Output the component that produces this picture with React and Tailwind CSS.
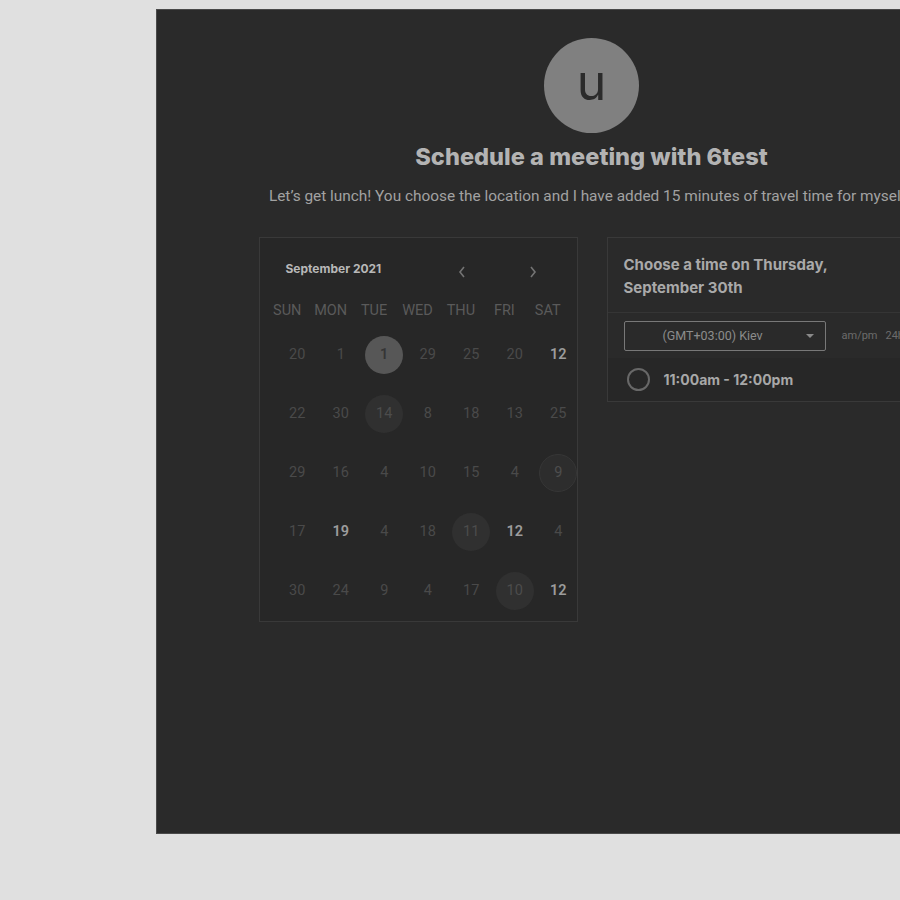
import React from "react";

const rows = [
  [["20"], ["1"], ["1", "sel"], ["29"], ["25"], ["20"], ["12", "b"]],
  [["22"], ["30"], ["14", "c"], ["8"], ["18"], ["13"], ["25"]],
  [["29"], ["16"], ["4"], ["10"], ["15"], ["4"], ["9", "ring"]],
  [["17"], ["19", "b"], ["4"], ["18"], ["11", "c"], ["12", "b"], ["4"]],
  [["30"], ["24"], ["9"], ["4"], ["17"], ["10", "c"], ["12", "b"]],
];

function Day({ v, k }) {
  if (k === "sel")
    return (
      <div className="w-[38px] h-[38px] rounded-full bg-[#575757] flex items-center justify-center text-[#353535] font-semibold">
        {v}
      </div>
    );
  if (k === "c")
    return (
      <div className="w-[38px] h-[38px] rounded-full bg-[#303030] flex items-center justify-center text-[#4c4c4c]">
        {v}
      </div>
    );
  if (k === "ring")
    return (
      <div className="w-[38px] h-[38px] rounded-full bg-[#2d2d2d] border border-[#363636] flex items-center justify-center text-[#4e4e4e]">
        {v}
      </div>
    );
  if (k === "b") return <span className="text-[#9c9c9c] font-semibold">{v}</span>;
  return <span className="text-[#4a4a4a]">{v}</span>;
}

export default function App() {
  return (
    <div className="w-[900px] h-[900px] overflow-hidden bg-[#e0e0e0] relative" style={{ fontFamily: "Roboto, 'Liberation Sans', sans-serif" }}>
      <div className="ml-[156px] mt-[9px] w-[870px] h-[825px] bg-[#2a2a2a] border-l border-b border-t border-[#4a4a4a] flex flex-col items-center pt-[28px]">
        <div className="w-[95px] h-[95px] rounded-full bg-[#808080] flex items-center justify-center">
          <span className="text-[50px] leading-none text-[#2b2b2b] -mt-[8px]" style={{ fontFamily: "Inter, sans-serif" }}>u</span>
        </div>
        <h1 className="mt-[9px] text-[23.6px] font-extrabold text-[#b3b3b3] leading-[30px]" style={{ fontFamily: "Inter, sans-serif" }}>
          Schedule a meeting with 6test
        </h1>
        <p className="mt-[14px] text-[15.4px] text-[#a2a2a2] whitespace-nowrap leading-[20px] -translate-x-[2px]">
          Let’s get lunch! You choose the location and I have added 15 minutes of travel time for myself.
        </p>
        <div className="mt-[31px] w-[666px] flex gap-[29px] items-start">
          <div className="w-[319px] h-[385px] bg-[#272727] border border-[#393939] shrink-0">
            <div className="flex items-center pl-[26px] pt-[22px] h-[40px]">
              <span className="text-[12px] font-bold text-[#b8b8b8] w-[150px]" style={{ fontFamily: "Inter, sans-serif" }}>September 2021</span>
              <svg width="10" height="14" viewBox="0 0 10 14" className="ml-[21px] mt-[5px]" fill="none" stroke="#747474" strokeWidth="1.6">
                <path d="M7 2 L3 7 L7 12" />
              </svg>
              <svg width="10" height="14" viewBox="0 0 10 14" className="ml-[61px] mt-[5px]" fill="none" stroke="#747474" strokeWidth="1.6">
                <path d="M3 2 L7 7 L3 12" />
              </svg>
            </div>
            <div className="grid grid-cols-7 w-[310px] pl-[6px] mt-[22px] text-[14.5px] text-[#5a5a5a] text-center">
              {["SUN", "MON", "TUE", "WED", "THU", "FRI", "SAT"].map((d) => (
                <span key={d}>{d}</span>
              ))}
            </div>
            <div className="pl-[16px] mt-[4px] flex flex-col">
              {rows.map((r, i) => (
                <div key={i} className="grid grid-cols-[repeat(7,43.5px)] h-[59px] items-center text-[14.5px]">
                  {r.map(([v, k], j) => (
                    <div key={j} className="flex items-center justify-center">
                      <Day v={v} k={k} />
                    </div>
                  ))}
                </div>
              ))}
            </div>
          </div>
          <div className="w-[318px] border border-[#393939] bg-[#2a2a2a] shrink-0 overflow-hidden">
            <div className="px-[16px] pt-[15px] pb-[13px] border-b border-[#353535] text-[15px] font-bold text-[#a9a9a9] leading-[23px]" style={{ fontFamily: "Inter, sans-serif" }}>
              Choose a time on Thursday,<br />September 30th
            </div>
            <div className="flex items-center px-[16px] pt-[8px] pb-[7px]">
              <div className="w-[202px] h-[30px] shrink-0 border border-[#787878] rounded-[2px] flex items-center relative">
                <span className="ml-[38px] text-[12.5px] text-[#8c8c8c]">(GMT+03:00) Kiev</span>
                <svg width="8" height="5" viewBox="0 0 8 5" className="absolute right-[11px] top-[12px]">
                  <path d="M0 0 L8 0 L4 4 Z" fill="#8a8a8a" />
                </svg>
              </div>
              <span className="ml-[16px] shrink-0 text-[11px] text-[#6c6c6c]">am/pm</span>
              <span className="ml-[8px] shrink-0 text-[11px] text-[#6c6c6c] whitespace-nowrap">24hr</span>
            </div>
            <div className="h-[43px] bg-[#272727] flex items-center pl-[19px]">
              <div className="w-[23px] h-[23px] rounded-full border-2 border-[#686868]" />
              <span className="ml-[14px] text-[14px] font-bold text-[#a8a8a8]" style={{ fontFamily: "Inter, sans-serif" }}>11:00am - 12:00pm</span>
            </div>
          </div>
        </div>
      </div>
    </div>
  );
}
